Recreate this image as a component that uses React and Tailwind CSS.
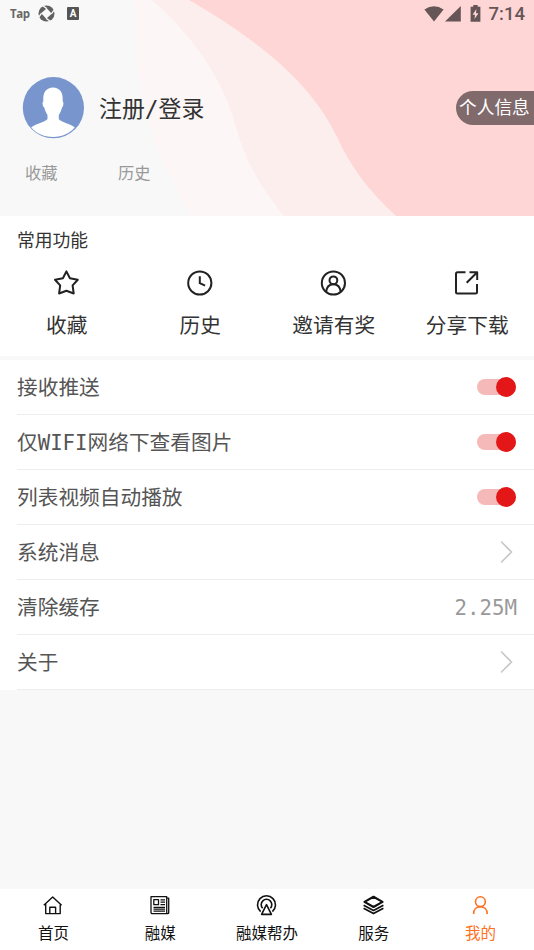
import React, { useState } from 'react';

const HeaderWaves = () => (
    <svg className="absolute inset-0 h-full w-full" viewBox="0 0 534 216" preserveAspectRatio="none">
        <path fill="#fdf6f6" d="M134 0C136 32 136 60 140 84C146 122 162 166 190 216H534V0Z" />
        <path fill="#fdeeee" d="M152 0C192 35 220 76 233 117C243 155 256 182 284 216H534V0Z" />
        <path fill="#ffd6d6" d="M189 0C246 33 309 77 337 137C351 168 370 192 396 216H534V0Z" />
    </svg>
);

const StatusBar = () => (
    <div className="relative flex h-[27px] items-center justify-between pl-[10px] pr-[9px] text-[#655556]">
        <div className="flex items-center">
            <span className="w-[22px] font-['Open_Sans'] text-[11.5px] font-bold leading-none tracking-[-0.4px] text-[#666]">Tap</span>
            <svg className="ml-[6px] h-[17px] w-[17px]" viewBox="0 0 17 17" fill="none">
                <circle cx="8.5" cy="8.5" r="8" fill="#606060" />
                <path fill="#f8f8f8" d="M8.8 3.2L13.8 8.8L8.2 13.8L3.2 8.2Z" />
                <path stroke="#f8f8f8" strokeWidth="1.3" d="M8.8 3.6L4.8 0.8M13.4 8.8L16.2 4.8M8.2 13.4L12.2 16.2M3.6 8.2L0.8 12.2" />
            </svg>
            <span className="ml-[12px] flex h-[13px] w-[12px] items-center justify-center rounded-[1px] bg-[#555] font-['Roboto'] text-[10px] font-bold leading-none text-white">A</span>
        </div>
        <div className="flex items-center">
            <svg className="h-[16px] w-[20px]" viewBox="0 0 20 16" fill="currentColor">
                <path d="M10 15.5L0.4 3.6Q10 -3 19.6 3.6Z" />
            </svg>
            <svg className="ml-[1px] h-[16px] w-[16px]" viewBox="0 0 16 16" fill="currentColor">
                <path d="M0 15.5L15.8 0V15.5Z" />
            </svg>
            <svg className="ml-[9px] h-[17px] w-[11px]" viewBox="0 0 11 17">
                <path fill="currentColor" d="M3.3 0H7.7V1.8H10.4V16.7H0.6V1.8H3.3Z" />
                <path fill="#ffd6d6" d="M6.4 4L2.6 9.7H5L4.5 14L8.5 8.2H6Z" />
            </svg>
            <span className="ml-[8px] pt-[2px] font-['Roboto'] text-[18.5px] font-medium leading-none">7:14</span>
        </div>
    </div>
);

const Avatar = () => (
    <svg className="h-[62px] w-[62px] shrink-0" viewBox="0 0 62 62">
        <circle cx="31.4" cy="30.7" r="30.6" fill="#7896cd" />
        <path
            fill="#fff"
            d="M31 10.5C24.5 10.500 21 15.500 21.300 22V24.500C20 25 20.500 29.500 22.300 30.500C23 34 24.300 36 25.500 38V42C24 45 13 47 9.200 50.500C14 56 21.500 60 31 60C40.500 60 48 56 52.800 50.500C49 47 38 45 36.800 42V38C38 36 39.300 34 40 30.500C41.500 29.500 42 25 40.700 24.500V22C41 15.500 37.500 10.500 31 10.500Z"
        />
    </svg>
);

const StarIcon = () => (
    <svg className="h-[28px] w-[28px]" viewBox="0 0 28 28" fill="none" stroke="#222" strokeWidth="2" strokeLinejoin="round">
        <path d="M13.4 2.4L16.9 9.3L24.8 10.8L19.6 16.4L20.7 24.5L13.4 21.7L6.1 24.5L7.2 16.4L2 10.8L9.9 9.3Z" />
    </svg>
);

const ClockIcon = () => (
    <svg className="h-[28px] w-[28px]" viewBox="0 0 28 28" fill="none" stroke="#222" strokeWidth="2">
        <circle cx="13.8" cy="14" r="11.6" />
        <path d="M13.8 7.3V14.2L19.1 16.6" />
    </svg>
);

const InviteIcon = () => (
    <svg className="h-[28px] w-[28px]" viewBox="0 0 28 28" fill="none" stroke="#222" strokeWidth="2">
        <circle cx="13.4" cy="14" r="11.6" />
        <circle cx="13.4" cy="11.3" r="3.9" />
        <path d="M6.1 22.8C6.7 18 9.4 15.2 13.4 15.2C17.4 15.2 20.1 18 20.7 22.8" />
    </svg>
);

const ShareIcon = () => (
    <svg className="h-[28px] w-[28px]" viewBox="0 0 28 28" fill="none" stroke="#222" strokeWidth="2" strokeLinejoin="round">
        <path d="M12.5 3.3H4.5Q3 3.3 3 4.8V23Q3 24.5 4.5 24.5H22.5Q24 24.5 24 23V15" />
        <path d="M16.5 3.3H24.2V11M23.7 3.8L13.7 13.8" />
    </svg>
);

const HomeIcon = () => (
    <svg className="h-[22px] w-[22px]" viewBox="0 0 22 22" fill="none" stroke="currentColor" strokeWidth="1.4" strokeLinejoin="round">
        <path d="M1.8 11.3L10.7 2.9L19.6 11.3M3.7 9.8V19.6H18.2V9.8M7.8 19.5V13.3H13.6V19.5" />
    </svg>
);

const NewsIcon = () => (
    <svg className="h-[22px] w-[22px]" viewBox="0 0 22 22" fill="none" stroke="currentColor" strokeWidth="1.3" strokeLinejoin="round">
        <path d="M17.7 4.2H19.7V18.7Q19.7 19.7 18.7 19.7H3.5Q2 19.7 2 18.2V2.7H17.7V18.2Q17.7 19.6 18.7 19.6" />
        <path d="M4.8 5.7H9.5V10.7H4.8ZM11.5 5.9H16M11.5 8.2H16M11.5 10.7H16M4.5 13.3H16M4.5 15.2H16M4.5 17.2H16" />
    </svg>
);

const BroadcastIcon = () => (
    <svg className="h-[22px] w-[22px]" viewBox="0 0 22 22" fill="none" stroke="currentColor" strokeWidth="1.6" strokeLinejoin="round">
        <path d="M4.6 17.6A9 9 0 1 1 16.4 17.6" />
        <path d="M6.6 14.2A5.3 5.3 0 1 1 14.4 14.2" />
        <path d="M10.5 10.7L5.6 20.4H15.4Z" />
    </svg>
);

const LayersIcon = () => (
    <svg className="h-[22px] w-[22px]" viewBox="0 0 22 22" fill="none" stroke="currentColor" strokeWidth="1.7" strokeLinejoin="round">
        <path d="M10.5 2.8L19.5 7.9L10.5 13L1.5 7.9Z" strokeWidth="2.2" />
        <path d="M0.6 11.2L10.5 16.5L20.4 11.2M0.6 14.2L10.5 19.6L20.4 14.2" />
    </svg>
);

const UserIcon = () => (
    <svg className="h-[22px] w-[22px]" viewBox="0 0 22 22" fill="none" stroke="currentColor" strokeWidth="1.6">
        <circle cx="10.4" cy="7.7" r="4.9" />
        <path d="M3.6 19.9C3.6 15.3 6.6 12.7 10.4 12.7C14.2 12.7 17.2 15.3 17.2 19.9" />
    </svg>
);

const features = [
    { label: '收藏', icon: <StarIcon /> },
    { label: '历史', icon: <ClockIcon /> },
    { label: '邀请有奖', icon: <InviteIcon /> },
    { label: '分享下载', icon: <ShareIcon /> },
];

const settings = [
    { label: '接收推送', type: 'switch' },
    { label: '仅WIFI网络下查看图片', type: 'switch' },
    { label: '列表视频自动播放', type: 'switch' },
    { label: '系统消息', type: 'link' },
    { label: '清除缓存', type: 'value', value: '2.25M' },
    { label: '关于', type: 'link' },
];

const tabs = [
    { label: '首页', icon: <HomeIcon /> },
    { label: '融媒', icon: <NewsIcon /> },
    { label: '融媒帮办', icon: <BroadcastIcon /> },
    { label: '服务', icon: <LayersIcon /> },
    { label: '我的', icon: <UserIcon /> },
];

const Toggle = () => {
    const [on, setOn] = useState(true);

    return (
        <button
            onClick={() => setOn(!on)}
            className={`mr-px flex h-[16px] w-[39px] items-center rounded-full ${on ? 'justify-end bg-[#f6b9ba]' : 'justify-start bg-gray-300'}`}
        >
            <span className={`h-[20px] w-[20px] rounded-full ${on ? 'bg-[#e31717]' : 'bg-white'}`} />
        </button>
    );
};

const SettingRow = ({ item }) => (
    <div className="ml-[17px] flex h-[55px] items-center justify-between border-b border-[#ededed] pr-[17px]">
        <span className="pt-[2px] text-[20.7px] leading-none text-[#555]">{item.label}</span>
        {item.type === 'switch' && <Toggle />}
        {item.type === 'value' && <span className="pt-[2px] text-[20.8px] leading-none text-[#999]">{item.value}</span>}
        {item.type === 'link' && (
            <svg className="mr-[4px] h-[24px] w-[14px]" viewBox="0 0 14 24" fill="none" stroke="#c8c8c8" strokeWidth="1.6">
                <path d="M2 1.5L12.5 12L2 22.5" />
            </svg>
        )}
    </div>
);

const App = () => {
    const [activeTab, setActiveTab] = useState('我的');

    return (
        <div className="flex h-[950px] w-[534px] flex-col overflow-hidden bg-[#f8f8f8] font-['DejaVu_Sans_Mono','Noto_Sans_CJK_SC',monospace]">
            <header className="relative h-[216px] shrink-0">
                <HeaderWaves />
                <StatusBar />
                <div className="relative mt-[49px] flex h-[63px] items-center pl-[22px]">
                    <Avatar />
                    <span className="ml-[15px] pt-[3px] text-[22.9px] leading-none text-[#333]">注册/登录</span>
                    <span className="ml-auto flex h-[34px] w-[78px] items-center whitespace-nowrap rounded-l-full bg-[#806a6b] pl-[3px] pt-[3px] text-[17.7px] leading-none text-white">
                        个人信息
                    </span>
                </div>
                <div className="relative mt-[27px] flex pl-[25px] text-[16.3px] leading-none text-[#999]">
                    <span className="w-[93px]">收藏</span>
                    <span>历史</span>
                </div>
            </header>

            <section className="h-[140px] shrink-0 bg-white pt-[16px]">
                <h2 className="pl-[17px] text-[17.8px] leading-[18px] text-[#333]">常用功能</h2>
                <div className="mt-[19px] grid grid-cols-4">
                    {features.map((item) => (
                        <button key={item.label} className="flex flex-col items-center">
                            {item.icon}
                            <span className="mt-[19px] text-[20.7px] leading-none text-[#333]">{item.label}</span>
                        </button>
                    ))}
                </div>
            </section>

            <section className="mt-[4px] shrink-0 bg-white">
                {settings.map((item) => (
                    <SettingRow key={item.label} item={item} />
                ))}
            </section>

            <nav className="mt-auto grid h-[61px] shrink-0 grid-cols-5 bg-white pt-[5px]">
                {tabs.map((tab) => (
                    <button
                        key={tab.label}
                        onClick={() => setActiveTab(tab.label)}
                        className={`flex flex-col items-center ${activeTab === tab.label ? 'text-[#ff7022]' : 'text-[#111]'}`}
                    >
                        {tab.icon}
                        <span className="mt-[11px] text-[15.5px] leading-none">{tab.label}</span>
                    </button>
                ))}
            </nav>
        </div>
    );
};

export default App;
